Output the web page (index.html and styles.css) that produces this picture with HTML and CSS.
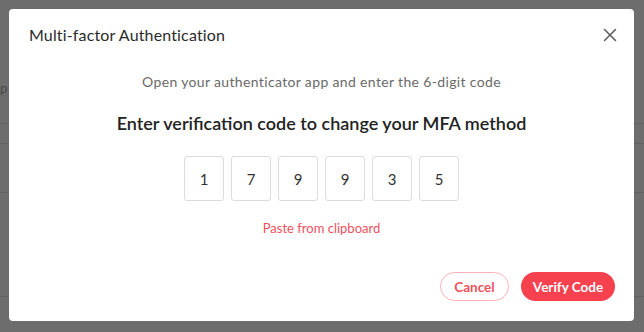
FILE: index.html
```html
<!DOCTYPE html>
<html lang="en">
<head>
<meta charset="utf-8">
<title>Multi-factor Authentication</title>
<link rel="stylesheet" href="styles.css">
</head>
<body>
<div class="backdrop">
  <div class="bg-row r1"><span class="bg-glyph">p</span></div>
  <div class="bg-row r2"></div>
  <div class="bg-row r3"></div>
  <div class="bg-row r4"></div>
  <div class="bg-row r5"></div>
</div>
<div class="modal" role="dialog" aria-labelledby="mfa-title">
  <div class="modal-header">
    <h2 id="mfa-title" class="modal-title">Multi-factor Authentication</h2>
    <button class="close-btn" aria-label="Close">
      <svg width="14" height="14" viewBox="0 0 14 14"><path d="M1.5 1.5 L12.5 12.5 M12.5 1.5 L1.5 12.5" stroke="#5a5a5a" stroke-width="1.5" stroke-linecap="round" fill="none"/></svg>
    </button>
  </div>
  <p class="subtitle">Open your authenticator app and enter the 6-digit code</p>
  <h3 class="heading">Enter verification code to change your MFA method</h3>
  <div class="code-row">
    <div class="digit">1</div>
    <div class="digit">7</div>
    <div class="digit">9</div>
    <div class="digit">9</div>
    <div class="digit">3</div>
    <div class="digit">5</div>
  </div>
  <a class="paste" href="#">Paste from clipboard</a>
  <div class="modal-footer">
    <button class="btn btn-outline">Cancel</button>
    <button class="btn btn-primary">Verify Code</button>
  </div>
</div>
</body>
</html>
```
FILE: styles.css
```css
* { box-sizing: border-box; }
html, body {
  margin: 0;
  width: 644px;
  height: 332px;
  overflow: hidden;
}
body {
  background: #6d6d6d;
  font-family: "Lato", "Liberation Sans", sans-serif;
  position: relative;
}
.backdrop {
  display: flex;
  flex-direction: column;
}
.bg-row {
  border-bottom: 1px solid #626262;
  position: relative;
}
.r1 { height: 124px; }
.r2 { height: 20px; }
.r3 { height: 49px; }
.r4 { height: 104px; }
.r5 { height: 30px; border-bottom: none; }
.bg-glyph {
  position: absolute;
  left: 0;
  top: 80px;
  color: #4a4a4a;
  font-size: 13px;
  line-height: 16px;
}
.modal {
  position: absolute;
  left: 9px;
  top: 9px;
  width: 625px;
  height: 312px;
  background: #fff;
  border-radius: 4px;
  display: flex;
  flex-direction: column;
  align-items: center;
}
.modal-header {
  width: 100%;
  display: flex;
  justify-content: space-between;
  align-items: center;
  padding: 14px 14px 0 20px;
}
.modal-title {
  margin: 0;
  font-size: 16px;
  line-height: 24px;
  font-weight: 400;
  letter-spacing: 0.15px;
  color: #2b2b2b;
}
.close-btn {
  border: none;
  background: none;
  padding: 0;
  width: 20px;
  height: 20px;
  display: flex;
  align-items: center;
  justify-content: center;
  cursor: pointer;
}
.subtitle {
  margin: 25px 0 0;
  font-size: 14px;
  line-height: 20px;
  letter-spacing: 0.35px;
  color: #6a6a6a;
}
.heading {
  margin: 19px 0 0;
  font-size: 18px;
  line-height: 24px;
  font-weight: 600;
  color: #222;
}
.code-row {
  margin-top: 21px;
  display: flex;
  gap: 7px;
}
.digit {
  width: 40px;
  height: 45px;
  border: 1px solid #dcdcdc;
  border-radius: 3px;
  display: flex;
  align-items: center;
  justify-content: center;
  font-size: 15px;
  color: #333;
}
.paste {
  margin-top: 18px;
  font-size: 13px;
  line-height: 18px;
  color: #f0505c;
  text-decoration: none;
}
.modal-footer {
  margin-top: 35px;
  width: 100%;
  display: flex;
  justify-content: flex-end;
  gap: 12px;
  padding-right: 19px;
}
.btn {
  height: 29px;
  border-radius: 15px;
  font-family: inherit;
  font-size: 13.5px;
  font-weight: 700;
  padding: 0;
  cursor: pointer;
}
.btn-outline {
  width: 69px;
  background: #fff;
  border: 1px solid #f9b3b8;
  color: #f0505c;
}
.btn-primary {
  width: 94px;
  background: #f6414f;
  border: none;
  color: #fff;
}
```
